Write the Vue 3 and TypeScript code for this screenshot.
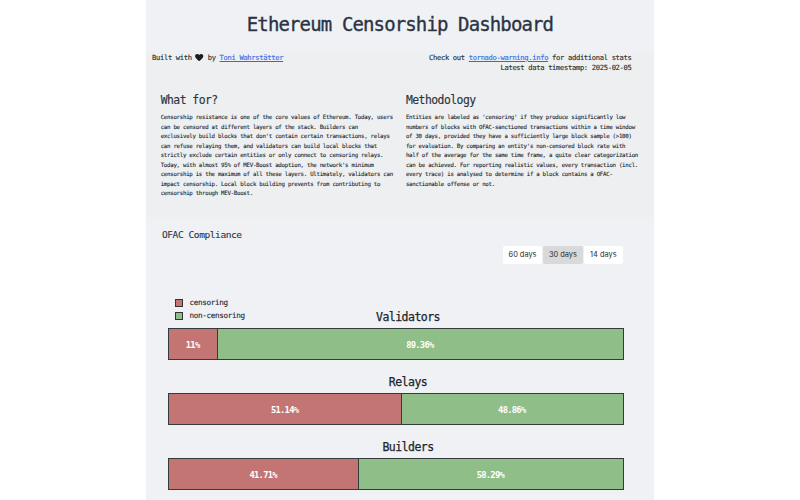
<script setup lang="ts">
import { ref } from 'vue'

interface Bar {
  name: string
  censoring: number
  censoringLabel: string
  otherLabel: string
}

const bars: Bar[] = [
  { name: 'Validators', censoring: 10.64, censoringLabel: '11%', otherLabel: '89.36%' },
  { name: 'Relays', censoring: 51.14, censoringLabel: '51.14%', otherLabel: '48.86%' },
  { name: 'Builders', censoring: 41.71, censoringLabel: '41.71%', otherLabel: '58.29%' },
]

const ranges: number[] = [60, 30, 14]
const selected = ref<number>(30)

const whatFor = `Censorship resistance is one of the core values of Ethereum. Today, users
can be censored at different layers of the stack. Builders can
exclusively build blocks that don't contain certain transactions, relays
can refuse relaying them, and validators can build local blocks that
strictly exclude certain entities or only connect to censoring relays.
Today, with almost 95% of MEV-Boost adoption, the network's minimum
censorship is the maximum of all these layers. Ultimately, validators can
impact censorship. Local block building prevents from contributing to
censorship through MEV-Boost.`

const methodology = `Entities are labeled as 'censoring' if they produce significantly low
numbers of blocks with OFAC-sanctioned transactions within a time window
of 30 days, provided they have a sufficiently large block sample (>100)
for evaluation. By comparing an entity's non-censored block rate with
half of the average for the same time frame, a quite clear categorization
can be achieved. For reporting realistic values, every transaction (incl.
every trace) is analysed to determine if a block contains a OFAC-
sanctionable offense or not.`
</script>

<template>
  <main class="page">
    <h1>Ethereum Censorship Dashboard</h1>
    <section class="intro">
      <div class="meta">
        <div>
          Built with
          <svg class="heart" viewBox="0 0 16 14"><path d="M8 14C5 11 0 8 0 4.2C0 1.6 1.8 0 4 0C5.8 0 7.2 .8 8 1.8C8.8 .8 10.2 0 12 0C14.2 0 16 1.6 16 4.2C16 8 11 11 8 14Z" /></svg>
          by <a>Toni Wahrstätter</a>
        </div>
        <div class="right">
          Check out <a>tornado-warning.info</a> for additional stats<br />Latest data timestamp: 2025-02-05
        </div>
      </div>
      <div class="columns">
        <article>
          <h2>What for?</h2>
          <p>{{ whatFor }}</p>
        </article>
        <article>
          <h2>Methodology</h2>
          <p>{{ methodology }}</p>
        </article>
      </div>
    </section>
    <section class="compliance">
      <h3>OFAC Compliance</h3>
      <div class="ranges">
        <button v-for="r in ranges" :key="r" :class="{ active: r === selected }" @click="selected = r">{{ r }} days</button>
      </div>
      <div class="chart">
        <div v-for="(b, i) in bars" :key="b.name" class="row">
          <ul v-if="i === 0" class="legend">
            <li><i class="red"></i>censoring</li>
            <li><i class="green"></i>non-censoring</li>
          </ul>
          <h4>{{ b.name }}</h4>
          <div class="bar">
            <div class="seg red" :style="{ width: b.censoring + '%' }">{{ b.censoringLabel }}</div>
            <div class="seg green rest">{{ b.otherLabel }}</div>
          </div>
        </div>
      </div>
    </section>
  </main>
</template>

<style>
body {
  margin: 0;
  background: #fff;
}
</style>

<style scoped>
* {
  box-sizing: border-box;
}
.page {
  width: 508px;
  height: 500px;
  margin: 0 auto;
  overflow: hidden;
  background: #eff1f5;
  color: #222529;
  font-family: 'DejaVu Sans Mono', 'Liberation Mono', monospace;
  letter-spacing: -0.046em;
}
h1, h2, h3, h4, p, ul {
  margin: 0;
  padding: 0;
  font-weight: 400;
  letter-spacing: -0.046em;
}
h1 {
  height: 50px;
  padding-top: 12px;
  text-align: center;
  font-size: 19px;
  line-height: 24px;
  color: #2b3442;
  -webkit-text-stroke: 0.35px #2b3442;
}
.intro {
  height: 170px;
  background: linear-gradient(#eff1f5, #edeff1 5px, #edeff1 165px, #eff1f5);
}
.meta {
  display: flex;
  justify-content: space-between;
  height: 43px;
  padding: 3px 22.5px 0 6px;
  font-size: 7.15px;
  line-height: 9.5px;
  letter-spacing: -0.046em;
  -webkit-text-stroke: 0.1px currentColor;
}
.right {
  text-align: right;
}
a {
  color: #2f68e8;
  text-decoration: underline;
}
.heart {
  width: 8.4px;
  height: 7.2px;
  margin: 0 -0.2px;
  vertical-align: -1px;
  fill: #1b1d20;
}
.columns {
  display: grid;
  grid-template-columns: 245.2px 240px;
  padding-left: 14.7px;
}
h2 {
  font-size: 11.4px;
  line-height: 15px;
  color: #2b3442;
  -webkit-text-stroke: 0.15px #2b3442;
}
p {
  margin-top: 5px;
  font-size: 5.72px;
  line-height: 9.53px;
  white-space: pre;
  -webkit-text-stroke: 0.1px currentColor;
}
.compliance {
  padding: 8px 30px 0 22px;
}
h3 {
  margin-left: -6px;
  font-size: 9.55px;
  line-height: 14px;
  color: #2b3442;
  -webkit-text-stroke: 0.1px #2b3442;
}
.ranges {
  display: flex;
  justify-content: flex-end;
  gap: 1px;
  height: 17.5px;
  margin: 4px 1px 0 0;
}
button {
  width: 39.4px;
  padding: 0;
  border: 0;
  border-radius: 2px;
  background: #fff;
  color: #2c2c2c;
  font: 7.4px/17px Inter, sans-serif;
  letter-spacing: 0;
}
button.active {
  background: #d9d9da;
}
.chart {
  display: flex;
  flex-direction: column;
  gap: 15px;
  margin-top: 46.5px;
}
.row {
  position: relative;
}
h4 {
  height: 18px;
  padding-left: 24px;
  text-align: center;
  font-size: 11.5px;
  line-height: 14px;
  -webkit-text-stroke: 0.25px #222529;
}
.legend {
  position: absolute;
  left: 7px;
  top: -13px;
  list-style: none;
  font-size: 7.65px;
  line-height: 12.6px;
  -webkit-text-stroke: 0.1px currentColor;
}
.legend li {
  display: flex;
  align-items: center;
  height: 12.6px;
  gap: 6.5px;
}
.legend i {
  width: 8px;
  height: 8px;
  border: 1px solid #333;
}
.bar {
  display: flex;
  height: 32px;
  border: 1px solid #333c3a;
}
.seg {
  display: flex;
  align-items: center;
  justify-content: center;
  padding: 1px 1px 0 0;
  font-size: 8.8px;
  font-weight: 700;
  color: #fff;
}
.red {
  background: #c37573;
}
.green {
  background: #8fbe88;
}
.rest {
  flex: 1;
  margin-left: -0.6px;
  border-left: 1px solid #333c3a;
}
</style>
